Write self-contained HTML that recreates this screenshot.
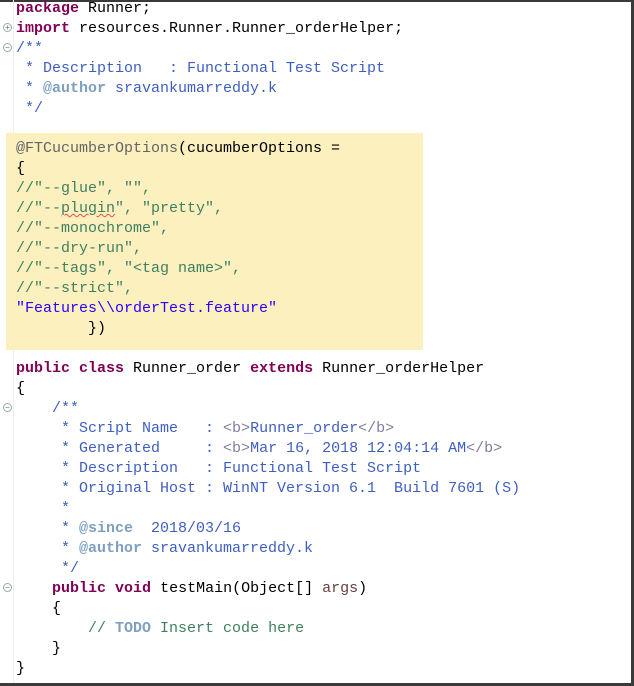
<!DOCTYPE html>
<html><head><style>
html,body{margin:0;padding:0;background:#fff;}
body{width:634px;height:686px;position:relative;overflow:hidden;}
.top{position:absolute;left:0;top:0;width:634px;height:2px;background:#3a3a3a;}
.right{position:absolute;right:0;top:0;width:3px;height:686px;background:#3a3a3a;}
.bot{position:absolute;left:0;bottom:0;width:634px;height:3px;background:#3a3a3a;}
.gut{position:absolute;left:13px;top:0;width:1px;height:686px;background:#eee;}
.hl{position:absolute;left:6px;top:133px;width:417px;height:217px;background:#fcf0bf;}
pre{position:absolute;left:16px;top:-1px;margin:0;font-family:"Liberation Mono",monospace;font-size:15px;line-height:20px;color:#000;}
.k{color:#7f0055;font-weight:bold}
.j{color:#3f5fbf}
.t{color:#7f9fbf;font-weight:bold}
.h{color:#7f7f9f}
.c{color:#3f7f5f}
.s{color:#2a00ff}
.a{color:#646464}
.v{color:#6a3e3e}
.u{text-decoration:underline wavy #e05050;text-decoration-thickness:1px}
.f{position:absolute;left:3px;width:7px;height:7px;border:1px solid #9aa;border-radius:50%;font-size:8px;line-height:7px;text-align:center;color:#667;font-family:"Liberation Sans",sans-serif;}
</style></head><body>
<div class="top"></div><div class="gut"></div>
<div class="hl"></div>
<div class="f" style="top:23px">+</div>
<div class="f" style="top:43px">−</div>
<div class="f" style="top:403px">−</div>
<div class="f" style="top:583px">−</div>
<pre><span class="k">package</span> Runner;
<span class="k">import</span> resources.Runner.Runner_orderHelper;
<span class="j">/**</span>
<span class="j"> * Description   : Functional Test Script</span>
<span class="j"> * </span><span class="t">@author</span><span class="j"> sravankumarreddy.k</span>
<span class="j"> */</span>

<span class="a">@FTCucumberOptions</span>(cucumberOptions =
{
<span class="c">//"--glue", "",</span>
<span class="c">//"--<span class="u">plugin</span>", "pretty",</span>
<span class="c">//"--monochrome",</span>
<span class="c">//"--dry-run",</span>
<span class="c">//"--tags", "&lt;tag name&gt;",</span>
<span class="c">//"--strict",</span>
<span class="s">"Features\\orderTest.feature"</span>
        })

<span class="k">public</span> <span class="k">class</span> Runner_order <span class="k">extends</span> Runner_orderHelper
{
    <span class="j">/**</span>
<span class="j">     * Script Name   : </span><span class="h">&lt;b&gt;</span><span class="j">Runner_order</span><span class="h">&lt;/b&gt;</span>
<span class="j">     * Generated     : </span><span class="h">&lt;b&gt;</span><span class="j">Mar 16, 2018 12:04:14 AM</span><span class="h">&lt;/b&gt;</span>
<span class="j">     * Description   : Functional Test Script</span>
<span class="j">     * Original Host : WinNT Version 6.1  Build 7601 (S)</span>
<span class="j">     *</span>
<span class="j">     * </span><span class="t">@since</span><span class="j">  2018/03/16</span>
<span class="j">     * </span><span class="t">@author</span><span class="j"> sravankumarreddy.k</span>
<span class="j">     */</span>
    <span class="k">public</span> <span class="k">void</span> testMain(Object[] <span class="v">args</span>)
    {
        <span class="c">// </span><span class="t">TODO</span><span class="c"> Insert code here</span>
    }
}</pre>
<div class="right"></div><div class="bot"></div>
</body></html>
